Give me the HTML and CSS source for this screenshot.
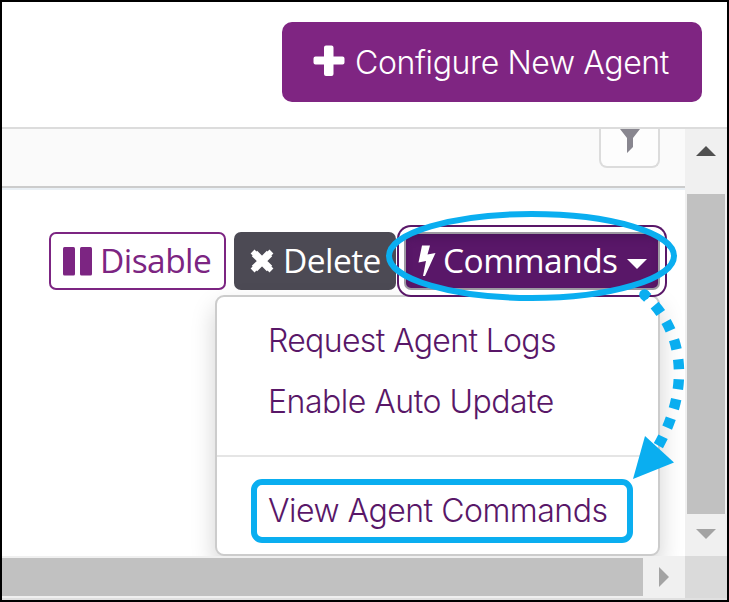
FILE: index.html
```
<!DOCTYPE html>
<html lang="en">
<head>
	<meta charset="UTF-8">
	<title>Agents</title>
	<link rel="stylesheet" href="styles.css">
</head>
<body>
<div class="page">
	<div class="head">
		<button class="configure">
			<svg width="32" height="32" viewBox="0 0 32 32"><path d="M13 .5h5.500q2 0 2 2v9h9q2 0 2 2v4q0 2-2 2h-9v9.500q0 2-2 2H13q-2 0-2-2v-9.500H2.500q-2 0-2-2v-4q0-2 2-2H11v-9q0-2 2-2z" fill="#fff"/></svg>
			<span>Configure New Agent</span>
		</button>
	</div>
	<div class="main">
		<div class="content">
			<div class="filters">
				<div class="filter">
					<svg width="20" height="24" viewBox="0 0 20 24"><path d="M0 0h20l-7 9v9l-6 6V9z" fill="#88868f"/></svg>
				</div>
			</div>
			<div class="actions">
				<button class="btn disable">
					<svg width="29" height="29" viewBox="0 0 29 29" fill="#7c2582"><rect width="12" height="28.500" rx="1.500"/><rect x="17" width="12" height="28.500" rx="1.500"/></svg>
					<span>Disable</span>
				</button>
				<button class="btn delete">
					<svg width="24" height="24" viewBox="0 0 24 24"><path d="M4.500 4.500l15 15M19.500 4.500l-15 15" stroke="#fff" stroke-width="7.600" stroke-linecap="butt"/><path d="M4.500 4.500l15 15M19.500 4.500l-15 15" stroke="#fff" stroke-width="5.500" stroke-linecap="square"/></svg>
					<span>Delete</span>
				</button>
				<div class="dropdown">
					<button class="btn commands">
						<svg width="18" height="32" viewBox="0 0 18 32"><path d="M4 .5h8L9.500 9.500 17.500 8 7 31H5l3-15L.5 17.500z" fill="#fff"/></svg>
						<span>Commands</span>
						<i class="caret"></i>
					</button>
					<div class="menu">
						<a class="item request">Request Agent Logs</a>
						<a class="item">Enable Auto Update</a>
						<div class="divider"></div>
						<a class="item view"><span>View Agent Commands</span></a>
					</div>
				</div>
			</div>
		</div>
		<div class="vscroll">
			<i class="up"></i>
			<div class="vthumb"></div>
			<i class="down"></i>
		</div>
		<div class="hscroll">
			<div class="hthumb"></div>
			<i class="right"></i>
		</div>
		<div class="corner"></div>
	</div>
	<!-- ellipse and dotted arrow on top of the page -->
	<svg class="callout" width="729" height="602" viewBox="0 0 729 602">
		<ellipse cx="531.500" cy="256" rx="142.500" ry="42" fill="none" stroke="#0aaef0" stroke-width="6"/>
		<circle cx="644.500" cy="294.500" r="5.300" fill="#0aaef0"/>
		<path d="M644 294.500C686 331 690 391 657 448" fill="none" stroke="#0aaef0" stroke-width="10.500" stroke-dasharray="5 10 10 10 10 10 10 10 10 10 10 10 10 10 10 10 10 10"/>
		<path d="M645 436l29 26.500-41 16.500z" fill="#0aaef0"/>
	</svg>
</div>
</body>
</html>
```
FILE: styles.css
```
*{
	box-sizing: border-box;
}
body{
	margin: 0;
}
.page{
	position: relative;
	width: 729px;
	height: 602px;
	border: 2px solid #000;
	background: #fff;
	overflow: hidden;
}
button{
	margin: 0;
	border: 0;
	white-space: nowrap;
}
svg{
	display: block;
	flex: none;
}
.head{
	display: flex;
	justify-content: flex-end;
	height: 127px;
	padding: 20px 25px 0 0;
	border-bottom: 2px solid #dcdcdc;
}
.configure{
	display: flex;
	align-items: center;
	width: 420px;
	height: 80px;
	padding: 0 0 3px 31px;
	gap: 10px;
	border-radius: 10px;
	background: #7f2582;
	color: #fff;
	font: 360 32px/40px Inter, sans-serif;
	letter-spacing: -.38px;
}
.configure span{
	padding-top: 4px;
}
.main{
	display: grid;
	grid-template-columns: 683px 42px;
	grid-template-rows: 427px 42px;
	height: 471px;
	background: #e0e0e0;
}
.content{
	background: #fff;
	overflow: hidden;
}
.filters{
	display: flex;
	justify-content: flex-end;
	height: 61px;
	padding-right: 25px;
	background: #fafafa;
	border-bottom: 2px solid #eaf0f5;
	box-shadow: inset 0 -2px #ccc;
}
.filter{
	display: flex;
	justify-content: center;
	width: 61px;
	height: 39px;
	border: 2px solid #dcdcdc;
	border-top: 0;
	border-radius: 0 0 8px 8px;
	background: #fdfdfd;
}
.actions{
	display: flex;
	gap: 8px;
	padding: 42px 0 0 47px;
}
.btn{
	display: flex;
	align-items: center;
	height: 58px;
	border-radius: 7px;
	font: 370 33.5px/46px "Open Sans", sans-serif;
	letter-spacing: -.55px;
	color: #fff;
}
.btn span{
	padding-bottom: 2px;
}
.disable{
	width: 177px;
	padding: 0 0 0 12px;
	gap: 8px;
	border: 2px solid #7c2582;
	background: #fff;
	color: #7c2582;
}
.delete{
	width: 162px;
	padding: 0 0 0 16px;
	gap: 9px;
	background: #4c4a54;
}
.dropdown{
	position: relative;
}
.commands{
	position: relative;
	z-index: 2;
	width: 256px;
	padding: 0 0 0 12px;
	gap: 7px;
	border: 2px solid #9d9aa2;
	background: #591768;
	box-shadow: inset 0 6px 8px -3px #48125a, 0 0 0 5px #fff, 0 0 0 7px #591768;
}
.caret{
	margin-left: 2px;
	margin-top: 5px;
	border: 10px solid transparent;
	border-top-color: #fff;
	border-bottom: 0;
}
.menu{
	position: absolute;
	top: 63px;
	right: 0;
	width: 445px;
	height: 261px;
	padding-top: 13px;
	border: 2px solid #ccc;
	border-radius: 9px;
	background: #fff;
	box-shadow: 0 12px 24px rgba(0,0,0,.18);
}
.item{
	display: block;
	height: 61px;
	padding-left: 51px;
	color: #591768;
	font: 300 32px/61px Inter, sans-serif;
	letter-spacing: -.5px;
	white-space: nowrap;
}
.request{
	letter-spacing: -.65px;
}
.divider{
	height: 2px;
	margin: 23px 0 22px;
	background: #e5e5e5;
}
.view{
	display: flex;
	align-items: center;
	width: 382px;
	height: 64px;
	margin-left: 34px;
	padding: 0 0 2px 11px;
	border: 6px solid #0aaef0;
	border-radius: 11px;
}
.vscroll{
	display: flex;
	flex-direction: column;
	align-items: center;
	padding-top: 17px;
	background: #f0f0f0;
}
.up{
	border: 10px solid transparent;
	border-bottom-color: #505050;
	border-top: 0;
}
.vthumb{
	width: 38px;
	height: 320px;
	margin: 38px 0 15px;
	background: #c1c1c1;
}
.down{
	border: 10px solid transparent;
	border-top-color: #a3a3a3;
	border-bottom: 0;
}
.hscroll{
	display: flex;
	align-items: center;
	gap: 16px;
	background: #f0f0f0;
}
.hthumb{
	width: 641px;
	height: 38px;
	background: #c1c1c1;
}
.right{
	border: 10px solid transparent;
	border-left-color: #a3a3a3;
	border-right: 0;
}
.corner{
	background: #dadada;
}
.callout{
	position: absolute;
	z-index: 3;
	left: -2px;
	top: -2px;
}
```
